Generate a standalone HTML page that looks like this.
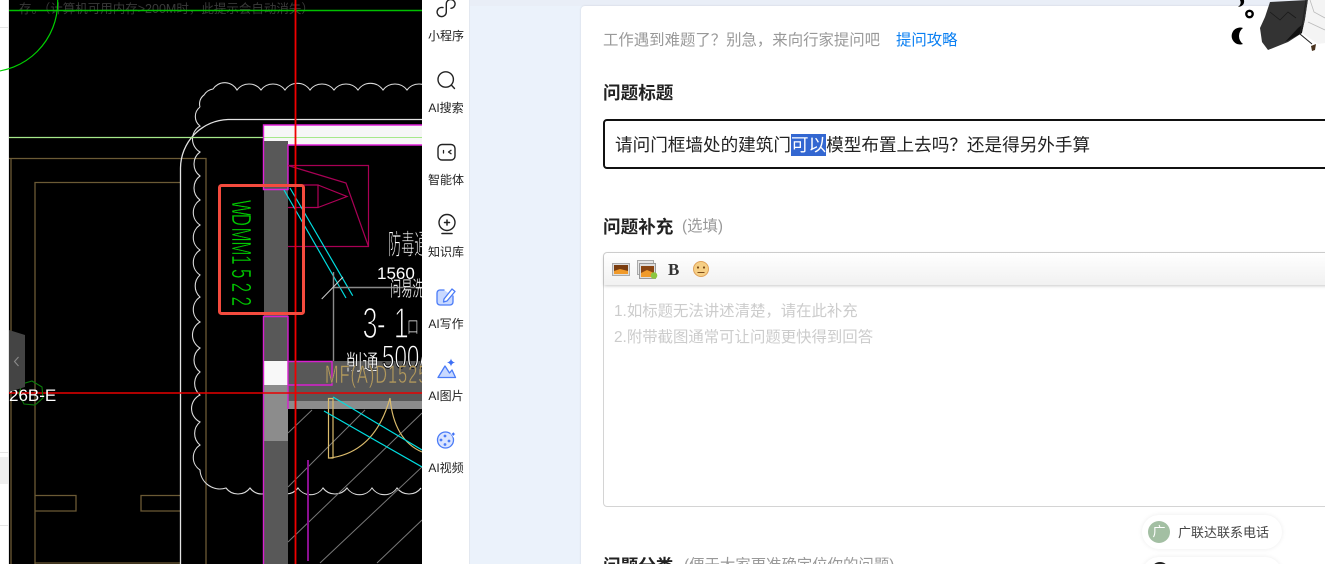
<!DOCTYPE html>
<html lang="zh"><head><meta charset="utf-8"><title>提问</title>
<style>
*{box-sizing:border-box;margin:0;padding:0}
html,body{width:1325px;height:564px;overflow:hidden;background:#ebf2fb;font-family:"Liberation Sans","Noto Sans CJK SC",sans-serif}
#wrap{position:relative;width:1325px;height:564px;overflow:hidden;background:#ebf2fb}
.a{position:absolute;white-space:nowrap}
#left{position:absolute;left:0;top:0;width:9px;height:564px;background:#fff;border-right:1px solid #e6e6e6}
#cad{position:absolute;left:0;top:0}
#side{position:absolute;left:422px;top:0;width:47px;height:564px;background:#fff}
#side .l{position:absolute;left:.5px;width:47px;text-align:center;font-size:12px;line-height:16px;color:#222;white-space:nowrap}
#sb{position:absolute;left:469px;top:0;width:1px;height:564px;background:#e3e8f0}
#top{position:absolute;left:470px;top:0;width:855px;height:6px;background:#e9eef7}
#card{position:absolute;left:581px;top:6px;width:760px;height:570px;background:#fff;border-radius:4px;box-shadow:0 0 2px rgba(0,0,0,.12)}
.h{font-size:17.6px;font-weight:bold;color:#222;line-height:24px}
.g{font-size:15.4px;color:#999;line-height:20px}
</style></head><body><div id="wrap">
<div id="left">
<div class="a" style="left:0;top:27px;width:8px;height:1px;background:#e4e4e4"></div>
<div class="a" style="left:0;top:452px;width:8px;height:1px;background:#e4e4e4"></div>
<div class="a" style="left:0;top:457px;width:8px;height:27px;background:#efefef"></div>
<div class="a" style="left:0;top:525px;width:8px;height:1px;background:#e4e4e4"></div>
</div>
<svg id="cad" width="422" height="564" viewBox="0 0 422 564" fill="none">
<rect x="9" y="0" width="413" height="564" fill="#000"/>
<text x="19" y="13" font-size="12.5" fill="#3a3a3a" font-family="Liberation Sans,Noto Sans CJK SC,sans-serif">存。（计算机可用内存&gt;200M时，此提示会自动消失）</text>
<path d="M9 10.5H422" stroke="#00c000" stroke-width="1.5"/>
<circle cx="-12.3" cy="2" r="70" stroke="#00d000" stroke-width="1.2"/>
<path d="M9 158.5H206V564M11 158.5V564M35 564V182.5H181M35 563H181M35 495.5H76V511H35M180 495.5H141V511H180" stroke="#6b5a35" stroke-width="1.3"/>
<path d="M180.500 564V168A49 49 0 0 1 228 119.500H422" stroke="#e2e2e2" stroke-width="1.300"/>
<path d="M200 107A11 11 0 0 1 204 95A13 13 0 0 1 213 89A14 14 0 0 1 237 90a15 15 0 0 1 24 0a15 15 0 0 1 24 0a15 15 0 0 1 25 0a15 15 0 0 1 24 0a15 15 0 0 1 24 0a15 15 0 0 1 25 0a15 15 0 0 1 24 0a15 15 0 0 1 24 0" stroke="#dcdcdc" stroke-width="1.1"/>
<path d="M200 107A12 12 0 0 0 200 126A15 15 0 0 0 200 152A15 15 0 0 0 200 176A15 15 0 0 0 200 200A15 15 0 0 0 200 225A15 15 0 0 0 200 250A15 15 0 0 0 200 275A15 15 0 0 0 200 297A15 15 0 0 0 200 322A15 15 0 0 0 200 348A15 15 0 0 0 200 372A15 15 0 0 0 200 395A15 15 0 0 0 200 422A15 15 0 0 0 200 445A15 15 0 0 0 200 470A20 20 0 0 0 226 488a15 15 0 0 0 24 0a15 15 0 0 0 24 0a15 15 0 0 0 24 0a15 15 0 0 0 25 0a15 15 0 0 0 24 0a15 15 0 0 0 25 0a15 15 0 0 0 25 0a15 15 0 0 0 24 0" stroke="#dcdcdc" stroke-width="1.1"/>
<path d="M9 137.5H422" stroke="#a6e88a" stroke-width="1.2"/>
<!-- strip + column -->
<rect x="264" y="125" width="160" height="20" fill="#f6f6f6"/>
<path d="M9 137.5H422" stroke="#a6e88a" stroke-width="1.1"/>
<rect x="264" y="141" width="24" height="423" fill="#585858"/>
<rect x="264" y="361" width="24" height="24" fill="#f8f8f8"/>
<rect x="264" y="385" width="24" height="56" fill="#8c8c8c"/>
<rect x="288" y="361" width="134" height="40" fill="#585858"/>
<rect x="288" y="401" width="134" height="8" fill="#8c8c8c"/>
<path d="M422 125H263.500V189.500H288V145H422" stroke="#e020d8" stroke-width="1.4"/>
<path d="M263.500 564V316.500H288V409M288 361.500H332V385H288" stroke="#d820d0" stroke-width="1.4"/>
<!-- hatch -->
<path d="M288 433L312 410M288 487L365 410M288 542L422 413M320 563L422 467M377 563L422 520" stroke="#777" stroke-width="1"/>
<path d="M308 460V561" stroke="#8a0f90" stroke-width="2"/>
<!-- crimson -->
<path d="M288 165.500H368.500V246.500H288M288 165.500L346 183L368.500 246.500" stroke="#a80055" stroke-width="1.2"/>
<path d="M288 185H318V207.500H288M318 185L347 196.500L318 207.500" stroke="#b00058" stroke-width="1.2"/>
<path d="M284 190L346 298M290 188L352.700 295.700" stroke="#00dde0" stroke-width="1.2"/>
<!-- grey box -->
<path d="M333.500 272V361M333 287.500H422" stroke="#8a8a8a" stroke-width="1.4"/>
<path d="M321.700 299L343 277" stroke="#ccc" stroke-width="1"/>
<!-- red -->
<path d="M295.500 0V564" stroke="#f00000" stroke-width="1.800"/>
<path d="M9 393H422" stroke="#e80000" stroke-width="1.500"/>
<!-- doors -->
<path d="M328.500 398.500H333V458H328.500ZM330 458Q375 452 390 398Q394 440 422 452" stroke="#dcbc6c" stroke-width="1.200"/>
<path d="M333 397L422 450M324 411L422 467" stroke="#00dde0" stroke-width="1.200"/>
<!-- cad text -->
<g font-family="Liberation Sans,Noto Sans CJK SC,sans-serif" fill="#fff">
<text transform="translate(388 254) scale(.66 1.4)" font-size="20" stroke="#000" stroke-width=".6">防毒通</text>
<text transform="translate(390 296) scale(.7 1.3)" font-size="16" stroke="#000" stroke-width=".25">问易洗</text>
<text x="377" y="279" font-size="17">1560</text>
<text transform="translate(362.500 338) scale(.68 1.1)" font-size="40" stroke="#000" stroke-width="1.400"><tspan x="0 21 46">3-1</tspan></text>
<text transform="translate(407 333) scale(.85 1.200)" font-size="14" stroke="#000" stroke-width=".4">口</text>
<text transform="translate(346 370) scale(.9 1.2)" font-size="18" stroke="#000" stroke-width=".25">削通</text>
<text transform="translate(382 368) scale(.7 1)" font-size="32" stroke="#000" stroke-width="1">500/</text>
<text transform="translate(325 383) scale(.65 1)" font-size="25" letter-spacing="1.600" fill="#b49a5c" stroke="#585858" stroke-width=".5">MF(A)D1525</text>
</g>
<polygon points="32,381 42,387 43,398 35,405 24,404 19,394 22,384" stroke="#0a7a0a" stroke-width="1.100"/>
<text x="9" y="401" font-size="17" fill="#fff" font-family="Liberation Sans,sans-serif">26B-E</text>
<text transform="translate(232 200) rotate(90) scale(.6 1)" font-size="28" fill="#00cc00" stroke="#000" stroke-width=".5" font-family="Liberation Sans,sans-serif"><tspan x="0 23 46 69 92 115 138 161">WDMM1522</tspan></text>
<rect x="219.500" y="185.500" width="84" height="128" rx="2" stroke="#f44b3e" stroke-width="3"/>
<path d="M9 330L25 335V387L9 392Z" fill="#444"/>
<path d="M18.500 357L14.500 361.500L18.500 366" stroke="#8a8a8a" stroke-width="1.100"/>
</svg>

<div id="side">
<svg class="a" style="left:0;top:0" width="47" height="480" viewBox="422 0 47 480" fill="none" stroke="#222" stroke-width="1.400" stroke-linecap="round" stroke-linejoin="round">
<path d="M443 7.600A4.600 4.600 0 1 0 446.300 12V3.800A4.400 4.400 0 1 1 451 8.300"/>
<circle cx="445.700" cy="79.500" r="7.700"/>
<path d="M451.300 85L454.500 88.500"/>
<rect x="438" y="144.500" width="17" height="15.500" rx="4"/>
<path d="M443.500 150.500V153M451 150.300L448.500 152L451 153.700" stroke-width="1.300"/>
<circle cx="447" cy="222.500" r="8"/>
<path d="M447 220V225M444.500 222.500H449.500" stroke-width="1.500"/>
<path d="M442 233.500H452" stroke-width="1.600"/>
<g stroke="#4a7bf7" stroke-width="1.300">
<path d="M444 290H440A3 3 0 0 0 437 293V302A3 3 0 0 0 440 305H450A3 3 0 0 0 453 302V296" fill="#c9d9ff"/>
<path d="M444 299L452 289L455 291.500L447 301L443.500 302Z" fill="#fff"/>
<path d="M438 377.500L445 366L449.500 373L452 370L455.500 377.500Z" fill="#c9d9ff"/>
<circle cx="445.500" cy="440" r="8" fill="#dbe5ff"/>
</g>
<path d="M451 358.500Q451.500 361.800 455 362.500Q451.500 363.200 451 366.500Q450.500 363.200 447 362.500Q450.500 361.800 451 358.500Z" fill="#3d6ff5" stroke="none"/>
<path d="M453.300 431Q453.800 433.300 456 434Q453.800 434.700 453.300 437Q452.800 434.700 450.500 434Q452.800 433.300 453.300 431Z" fill="#3d6ff5" stroke="#fff" stroke-width=".6"/>
<g fill="#4a7bf7" stroke="none"><circle cx="445" cy="436" r="1.400"/><circle cx="441" cy="440" r="1.400"/><circle cx="449" cy="441" r="1.400"/><circle cx="445" cy="444.500" r="1.400"/></g>
</svg>
<div class="l" style="top:28px">小程序</div>
<div class="l" style="top:100px">AI搜索</div>
<div class="l" style="top:172px">智能体</div>
<div class="l" style="top:244px">知识库</div>
<div class="l" style="top:316px">AI写作</div>
<div class="l" style="top:388px">AI图片</div>
<div class="l" style="top:460px">AI视频</div>
</div>
<div id="sb"></div>
<div id="top"></div>
<div id="card"></div>

<div class="a" style="left:603px;top:30px;font-size:15.4px;line-height:22px;color:#999">工作遇到难题了？别急，来向行家提问吧</div>
<div class="a" style="left:896px;top:30px;font-size:15.4px;line-height:22px;color:#0a7ff2">提问攻略</div>
<div class="a h" style="left:603px;top:81px">问题标题</div>

<div class="a" style="left:603px;top:119px;width:800px;height:50px;border:2px solid #111;border-radius:4px;background:#fff"></div>
<div class="a" style="left:791px;top:134px;width:35px;height:22px;background:#3367d1"></div>
<div class="a" style="left:615px;top:133px;font-size:17.6px;line-height:24px;color:#222">请问门框墙处的建筑门<span style="color:#fff">可以</span>模型布置上去吗？还是得另外手算</div>

<div class="a h" style="left:603px;top:215px">问题补充</div>
<div class="a g" style="left:682px;top:217px">(选填)</div>

<div class="a" style="left:603px;top:252px;width:800px;height:255px;border:1px solid #d4d4d4;border-radius:4px;background:#fff"></div>
<div class="a" style="left:604px;top:253px;width:800px;height:32px;border-radius:4px 0 0 0;background:linear-gradient(#fff,#f1f1f1);box-shadow:0 1px 3px rgba(0,0,0,.22)"></div>
<svg class="a" style="left:610px;top:258px" width="104" height="24" viewBox="610 258 104 24">
<rect x="612.500" y="263.500" width="17" height="12" fill="#ddd" stroke="#aaa"/>
<rect x="614" y="265" width="14" height="9" fill="#7a3d10"/>
<path d="M614 271L620 269L628 271V274H614Z" fill="#f09a2a"/>
<rect x="637.500" y="260.500" width="16" height="14" fill="#e6e6e6" stroke="#aaa"/>
<rect x="639.500" y="263.500" width="16" height="15" fill="#ddd" stroke="#999"/>
<rect x="641" y="266" width="13" height="11" fill="#8a4512"/>
<path d="M641 273L647 270L654 273V277H641Z" fill="#f09a2a"/>
<circle cx="654" cy="275.500" r="3.300" fill="#8cc63f"/>
<text x="668" y="275" font-family="Liberation Serif,serif" font-weight="bold" font-size="17" fill="#333">B</text>
<circle cx="701" cy="269" r="7.500" fill="#f6cf85" stroke="#e0a25a"/>
<circle cx="698" cy="267.500" r="1.100" fill="#7a4a18"/><circle cx="704" cy="267.500" r="1.100" fill="#7a4a18"/>
<path d="M697.500 272.500H704.500" stroke="#7a4a18"/>
</svg>
<div class="a" style="left:614px;top:299px;font-size:15.4px;line-height:26px;color:#ccc">1.如标题无法讲述清楚，请在此补充<br>2.附带截图通常可让问题更快得到回答</div>

<div class="a h" style="left:603px;top:554px">问题分类</div>
<div class="a g" style="left:684px;top:556px">(便于大家更准确定位你的问题)</div>

<!-- illustration -->
<svg class="a" style="left:1225px;top:0" width="100" height="56" viewBox="1225 0 100 56">
<path d="M1240 0H1244Q1245 6 1238 7Q1242 4 1240 0Z" fill="#000"/>
<circle cx="1249.500" cy="14" r="3.200" fill="none" stroke="#000" stroke-width="2.400"/>
<path d="M1243 28A8.500 8.500 0 1 0 1243 44A10 10 0 0 1 1243 28Z" fill="#000"/>
<path d="M1270 2L1265 17L1260 28L1262 42L1268 50L1288 42L1302 33L1305 20L1308 0Z" fill="#333"/>
<path d="M1285 42L1302 33L1303 24L1298 28Z" fill="#111"/>
<path d="M1270 12L1280 20L1288 12L1296 18" fill="none" stroke="#1a1a1a" stroke-width=".8"/>
<path d="M1308 0L1305 20L1302 33L1318 44L1325 43V0Z" fill="#f4f4f4"/>
<path d="M1306 0L1303 20L1300 34L1312 44" fill="none" stroke="#222" stroke-width="1"/>
<path d="M1310 0L1314 12L1325 18M1308 22L1325 30" fill="none" stroke="#bbb" stroke-width=".8"/>
<path d="M1311 46L1316 44L1315 50L1312 51Z" fill="#4a3420"/>
</svg>

<!-- contact widget -->
<div class="a" style="left:1142px;top:515px;width:140px;height:34px;border-radius:17px;background:#fff;box-shadow:0 0 5px rgba(0,0,0,.08)"></div>
<div class="a" style="left:1148px;top:521px;width:22px;height:22px;border-radius:50%;background:#a3bfa3;color:#fff;font-size:13px;line-height:22px;text-align:center">广</div>
<div class="a" style="left:1178px;top:524px;font-size:13px;line-height:18px;color:#444">广联达联系电话</div>
<div class="a" style="left:1142px;top:557px;width:140px;height:34px;border-radius:17px;background:#fff;box-shadow:0 0 5px rgba(0,0,0,.08)"></div>
<div class="a" style="left:1151px;top:562px;width:18px;height:18px;border-radius:50%;border:2px solid #222"></div>
</div></body></html>
